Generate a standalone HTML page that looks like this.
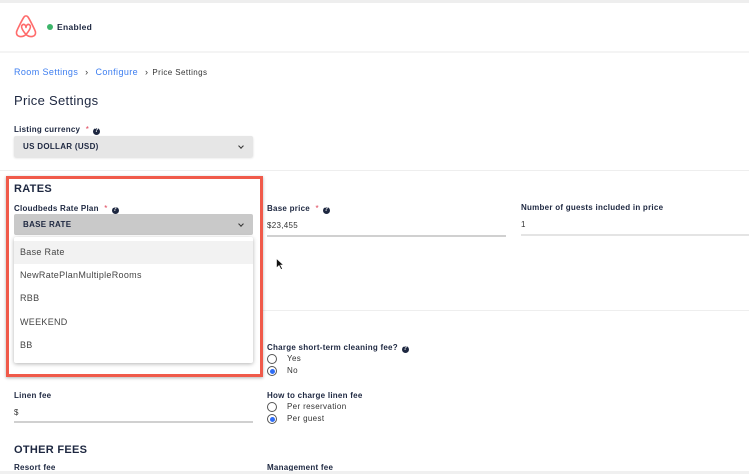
<!DOCTYPE html>
<html><head><meta charset="utf-8"><style>
*{margin:0;padding:0;box-sizing:border-box}
body{width:749px;height:474px;overflow:hidden;background:#fff;font-family:"Liberation Sans",sans-serif;color:#1d2740;position:relative}
.a{position:absolute;white-space:nowrap}
.lbl{font-size:8px;font-weight:bold;color:#1d2740;letter-spacing:.25px}
.req{color:#e0455a;font-weight:normal;margin-left:3px}
.q{display:inline-block;width:7px;height:7px;border-radius:50%;background:#1d2740;color:#fff;font-size:6px;text-align:center;line-height:7px;vertical-align:0px;margin-left:4px}
.sel{position:absolute;font-size:8px;font-weight:bold;padding-left:9px;line-height:21px;border-radius:2px;letter-spacing:.3px}
.chev{position:absolute;right:10px;top:8px;width:4px;height:4px;border-right:1px solid #333;border-bottom:1px solid #333;transform:rotate(45deg)}
.ul{position:absolute;height:2px;background:#d0d0d0}
.val{font-size:8px;color:#333;letter-spacing:.3px}
.radio{position:absolute;width:10px;height:10px;border:1.2px solid #555;border-radius:50%}
.radio.on::after{content:"";position:absolute;left:1.5px;top:1.5px;width:5px;height:5px;border-radius:50%;background:#2f6df6}
.rt{font-size:8px;color:#333;letter-spacing:.35px}
.item{position:absolute;left:0;width:239px;height:23px;font-size:9px;color:#444;padding-left:6px;line-height:23px;letter-spacing:.3px}
</style></head><body>
<div class="a" style="left:0;top:0;width:749px;height:3px;background:#eeeeee"></div>
<div class="a" style="left:0;top:51px;width:749px;height:2px;background:#f4f4f4"></div>
<svg class="a" style="left:14px;top:14px" width="24" height="25" viewBox="0 0 24 25"><path d="M12 20.5C9 17 6 12.5 8.5 10.8 10.5 9.5 12 11.5 12 13.5 12 11.5 13.5 9.5 15.5 10.8 18 12.5 15 17 12 20.5ZM12 20.5C8 24 2 23 2.5 18 3 16 8 6 10 3 11 1.5 13 1.5 14 3 16 6 21 16 21.5 18 22 23 16 24 12 20.5Z" fill="none" stroke="#ff6b6b" stroke-width="1.6" stroke-linejoin="round"/></svg>
<div class="a" style="left:47px;top:24px;width:6px;height:6px;border-radius:50%;background:#3db56a"></div>
<div class="a" style="left:57px;top:22px;font-size:8.5px;font-weight:bold;color:#1d2740;letter-spacing:.3px">Enabled</div>
<div class="a" style="left:14px;top:67px;font-size:9px;color:#3d7ef0;letter-spacing:.4px">Room Settings <span style="color:#333;margin:0 4px">›</span> Configure <span style="color:#333;margin:0 4px">›</span><span style="color:#333;font-size:8px">Price Settings</span></div>
<div class="a" style="left:14px;top:93px;font-size:13px;color:#1d2740;letter-spacing:.3px">Price Settings</div>
<div class="a lbl" style="left:14px;top:125px">Listing currency <span class="req">*</span><span class="q">?</span></div>
<div class="sel" style="left:14px;top:136px;width:239px;height:21px;background:#e6e6e6;box-shadow:0 1px 2px rgba(0,0,0,.15)">US DOLLAR (USD)<div class="chev"></div></div>
<div class="a" style="left:0;top:170px;width:749px;height:1px;background:#eee"></div>

<div class="a lbl" style="left:267px;top:204px">Base price <span class="req">*</span><span class="q">?</span></div>
<div class="a val" style="left:267px;top:221px">$23,455</div>
<div class="ul" style="left:267px;top:235px;width:239px"></div>
<div class="a lbl" style="left:521px;top:203px">Number of guests included in price</div>
<div class="a val" style="left:521px;top:220px">1</div>
<div class="ul" style="left:521px;top:234px;width:228px;background:#e4e4e4"></div>
<svg class="a" style="left:276px;top:258px" width="8" height="12" viewBox="0 0 8 12"><path d="M0.5 0.5V10L3 7.5 5 11.5 6.5 10.8 4.5 7H7.5Z" fill="#111" stroke="#fff" stroke-width=".6"/></svg>
<div class="a" style="left:262px;top:310px;width:487px;height:1px;background:#eee"></div>

<div class="a lbl" style="left:267px;top:343px">Charge short-term cleaning fee?<span class="q">?</span></div>
<div class="radio" style="left:267px;top:354px"></div><div class="a rt" style="left:287px;top:354px">Yes</div>
<div class="radio on" style="left:267px;top:366px"></div><div class="a rt" style="left:287px;top:366px">No</div>

<div class="a lbl" style="left:14px;top:391px">Linen fee</div>
<div class="a val" style="left:14px;top:408px">$</div>
<div class="ul" style="left:14px;top:421px;width:239px"></div>
<div class="a lbl" style="left:267px;top:391px">How to charge linen fee</div>
<div class="radio" style="left:267px;top:402px"></div><div class="a rt" style="left:287px;top:402px">Per reservation</div>
<div class="radio on" style="left:267px;top:414px"></div><div class="a rt" style="left:287px;top:414px">Per guest</div>

<div class="a" style="left:14px;top:444px;font-size:11px;font-weight:bold;color:#1d2740;letter-spacing:.3px">OTHER FEES</div>
<div class="a lbl" style="left:14px;top:463px">Resort fee</div>
<div class="a lbl" style="left:267px;top:463px">Management fee</div>
<div class="a" style="left:0;top:471px;width:749px;height:3px;background:#f0f0f0"></div>

<div class="a" style="left:6px;top:176px;width:257px;height:201px;border:3px solid #f05a4a;box-shadow:0 1px 3px rgba(0,0,0,.3)"></div>
<div class="a" style="left:14px;top:183px;font-size:11px;font-weight:bold;color:#1d2740;letter-spacing:.3px">RATES</div>
<div class="a lbl" style="left:14px;top:204px">Cloudbeds Rate Plan <span class="req">*</span><span class="q">?</span></div>
<div class="sel" style="left:14px;top:214px;width:239px;height:21px;background:#c9c9c9">BASE RATE<div class="chev"></div></div>
<div class="a" style="left:14px;top:237px;width:239px;height:126px;background:#fff;box-shadow:0 1px 4px rgba(0,0,0,.3);border-radius:2px">
<div class="item" style="top:4px;background:#f2f2f2">Base Rate</div>
<div class="item" style="top:27px">NewRatePlanMultipleRooms</div>
<div class="item" style="top:50px">RBB</div>
<div class="item" style="top:74px">WEEKEND</div>
<div class="item" style="top:97px">BB</div>
</div>
</body></html>
